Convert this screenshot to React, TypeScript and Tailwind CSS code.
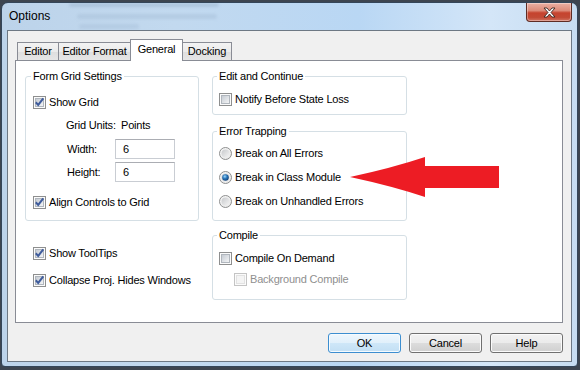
import React from "react";

function Defs() {
  return (
    <svg className="absolute w-0 h-0" aria-hidden="true">
      <defs>
        <linearGradient id="cbInner" x1="0" y1="0" x2="1" y2="1">
          <stop offset="0" stopColor="#c3c9d1" />
          <stop offset="1" stopColor="#f6f7f8" />
        </linearGradient>
        <linearGradient id="rbOuter" x1="0" y1="0" x2="1" y2="1">
          <stop offset="0" stopColor="#f8f8f8" />
          <stop offset="1" stopColor="#e6e6e6" />
        </linearGradient>
        <linearGradient id="rbInner" x1="0" y1="0" x2="1" y2="1">
          <stop offset="0" stopColor="#c7c9cc" />
          <stop offset="1" stopColor="#f5f5f5" />
        </linearGradient>
        <radialGradient id="rbDot" cx="0.4" cy="0.35" r="0.7">
          <stop offset="0" stopColor="#9fd8fb" />
          <stop offset="0.45" stopColor="#2b78bb" />
          <stop offset="1" stopColor="#0e3b72" />
        </radialGradient>
      </defs>
    </svg>
  );
}

function CheckBox({ checked, disabled }: { checked?: boolean; disabled?: boolean }) {
  return (
    <svg width="13" height="13" viewBox="0 0 13 13" className="shrink-0">
      <rect x="0.5" y="0.5" width="12" height="12" fill="#fbfbfb" stroke={disabled ? "#c4c4c4" : "#8e8f8f"} />
      <rect
        x="2.5"
        y="2.5"
        width="8"
        height="8"
        fill={disabled ? "#f4f4f4" : "url(#cbInner)"}
        stroke={disabled ? "#e2e2e2" : "#b0b6bd"}
      />
      {checked && (
        <path d="M2.8 6.3 L5.2 8.9 L10.3 2.4" stroke="#3f5c9c" strokeWidth="2" fill="none" strokeLinejoin="miter" />
      )}
    </svg>
  );
}

function Radio({ checked }: { checked?: boolean }) {
  return (
    <svg width="13" height="13" viewBox="0 0 13 13" className="shrink-0">
      <circle cx="6.5" cy="6.5" r="6" fill="url(#rbOuter)" stroke="#8e8f8f" />
      <circle cx="6.5" cy="6.5" r="4" fill="url(#rbInner)" />
      {checked && <circle cx="6.5" cy="6.5" r="3.3" fill="url(#rbDot)" />}
    </svg>
  );
}

function CheckRow({
  checked,
  disabled,
  className = "",
  children,
}: {
  checked?: boolean;
  disabled?: boolean;
  className?: string;
  children: React.ReactNode;
}) {
  return (
    <div className={`flex items-center h-[16px] gap-[3px] ${className}`}>
      <CheckBox checked={checked} disabled={disabled} />
      <span className={disabled ? "text-[#8f8f8f]" : ""}>{children}</span>
    </div>
  );
}

function RadioRow({ checked, className = "", children }: { checked?: boolean; className?: string; children: React.ReactNode }) {
  return (
    <div className={`flex items-center h-[16px] gap-[3px] ${className}`}>
      <Radio checked={checked} />
      <span>{children}</span>
    </div>
  );
}

function Group({ title, className = "", children }: { title: string; className?: string; children: React.ReactNode }) {
  return (
    <fieldset className={`border border-[#d5dfe5] rounded-[3px] ${className}`}>
      <legend className="px-[2px] -ml-[2px] leading-[14px]">{title}</legend>
      {children}
    </fieldset>
  );
}

function Tab({ label, width, selected, first }: { label: string; width: string; selected?: boolean; first?: boolean }) {
  if (selected) {
    return (
      <div
        className={`${width} ${first ? "" : "-ml-px"} relative z-10 h-[22px] border border-b-0 border-[#898c95] bg-white flex items-center justify-center pb-[3px]`}
      >
        {label}
      </div>
    );
  }
  return (
    <div
      className={`${width} ${first ? "" : "-ml-px"} h-[18px] mb-px border border-b-0 border-[#898c95] bg-[linear-gradient(180deg,#f3f3f3_0%,#ebebeb_50%,#dedede_51%,#e6e6e6_100%)] flex items-center justify-center`}
    >
      {label}
    </div>
  );
}

function Button({ label, primary }: { label: string; primary?: boolean }) {
  return (
    <div
      className={`w-[73px] h-[20px] rounded-[3px] border flex items-center justify-center ${
        primary
          ? "border-[#3c8ed0] bg-[linear-gradient(180deg,#eef7fd_0%,#e1f0fb_49%,#cfe7f8_50%,#c2dff4_100%)] shadow-[inset_0_0_0_1px_#f5fbff]"
          : "border-[#707070] bg-[linear-gradient(180deg,#f2f2f2_0%,#ebebeb_49%,#dddddd_50%,#cfcfcf_100%)] shadow-[inset_0_0_0_1px_#fbfbfb]"
      }`}
    >
      {label}
    </div>
  );
}

export default function App() {
  return (
    <div className="w-[580px] h-[370px] bg-[#3d4550] pt-[2px] pl-[1px] overflow-hidden font-['Liberation_Sans',Arial,sans-serif] text-[11px] tracking-[-0.2px] text-black">
      <Defs />
      <div className="w-[577px] h-[365px] rounded-t-[7px] rounded-b-[4px] border border-[#34465a] bg-[linear-gradient(90deg,#bcd3ea_0%,#c2d9ef_30%,#b9d7f4_62%,#d4e6f8_85%,#c6dcf1_100%)] flex flex-col px-[5px] pb-[4px]">
        {/* title bar */}
        <div className="relative h-[27px] flex items-start overflow-hidden">
          {/* blurred background seen through the glass */}
          <div className="absolute left-[62px] top-[0px] w-[150px] h-[4px] rounded-full bg-[#9fb8d2] opacity-60 blur-[1.5px]" />
          <div className="absolute left-[70px] top-[11px] w-[140px] h-[5px] rounded-full bg-[#a7bfd8] opacity-50 blur-[1.8px]" />
          <div className="absolute left-[72px] top-[21px] w-[60px] h-[5px] rounded-full bg-[#a7bfd8] opacity-45 blur-[1.8px]" />
          <span className="relative pl-[2px] pt-[5px] text-[12px] leading-[16px] tracking-normal">Options</span>
          <div className="relative ml-auto w-[46px] h-[19px] rounded-b-[4px] border border-t-0 border-[#5e2c24] bg-[linear-gradient(180deg,#eab0a3_0%,#dc8a78_42%,#c6432e_55%,#c24a35_80%,#d27462_100%)] shadow-[inset_0_0_0_1px_rgba(255,255,255,0.35)] flex items-center justify-center">
            <svg width="13" height="11" viewBox="0 0 13 11">
              <path
                d="M1 1 H4 L6.5 4 L9 1 H12 L8 5.5 L12 10 H9 L6.5 7 L4 10 H1 L5 5.5 Z"
                fill="#ffffff"
                stroke="#3b2620"
                strokeWidth="0.9"
                strokeLinejoin="round"
              />
            </svg>
          </div>
        </div>

        {/* client area */}
        <div className="flex-1 border border-[#6d7884] bg-[#f0f0f0] flex flex-col pl-[7px] pr-[8px] pt-[8px]">
          {/* tabs */}
          <div className="flex items-end h-[22px] pl-[2px] -mb-px relative z-10">
            <Tab label="Editor" width="w-[42px]" first />
            <Tab label="Editor Format" width="w-[73px]" />
            <Tab label="General" width="w-[53px]" selected />
            <Tab label="Docking" width="w-[50px]" />
          </div>

          {/* panel */}
          <div className="relative h-[263px] border border-[#898c95] bg-white flex pl-[9px] pt-[8px]">
            {/* left column */}
            <div className="w-[174px] flex flex-col">
              <Group title="Form Grid Settings" className="h-[152px] px-[7px]">
                <CheckRow checked className="mt-[11px]">
                  Show Grid
                </CheckRow>
                <div className="mt-[7px] h-[16px] flex items-center pl-[33px]">
                  <span className="w-[55px]">Grid Units:</span>
                  <span>Points</span>
                </div>
                <div className="mt-[6px] h-[20px] flex items-center pl-[34px]">
                  <span className="w-[48px]">Width:</span>
                  <div className="w-[60px] h-[20px] border border-[#c9cdd3] border-t-[#abadb3] bg-white flex items-center pl-[7px]">
                    6
                  </div>
                </div>
                <div className="mt-[3px] h-[20px] flex items-center pl-[34px]">
                  <span className="w-[48px]">Height:</span>
                  <div className="w-[60px] h-[20px] border border-[#c9cdd3] border-t-[#abadb3] bg-white flex items-center pl-[7px]">
                    6
                  </div>
                </div>
                <CheckRow checked className="mt-[12px]">
                  Align Controls to Grid
                </CheckRow>
              </Group>
              <div className="pl-[8px] flex flex-col">
                <CheckRow checked className="mt-[24px]">
                  Show ToolTips
                </CheckRow>
                <CheckRow checked className="mt-[11px]">
                  Collapse Proj. Hides Windows
                </CheckRow>
              </div>
            </div>

            {/* right column */}
            <div className="w-[195px] ml-[13px] flex flex-col">
              <Group title="Edit and Continue" className="h-[46px] px-[6px]">
                <CheckRow className="mt-[8px]">Notify Before State Loss</CheckRow>
              </Group>
              <Group title="Error Trapping" className="mt-[9px] h-[97px] px-[6px]">
                <RadioRow className="mt-[7px]">Break on All Errors</RadioRow>
                <RadioRow checked className="mt-[8px]">
                  Break in Class Module
                </RadioRow>
                <RadioRow className="mt-[8px]">Break on Unhandled Errors</RadioRow>
              </Group>
              <Group title="Compile" className="mt-[7px] h-[72px] px-[6px]">
                <CheckRow className="mt-[8px]">Compile On Demand</CheckRow>
                <CheckRow disabled className="mt-[5px] pl-[15px]">
                  Background Compile
                </CheckRow>
              </Group>
            </div>

            {/* red annotation arrow */}
            <svg className="absolute left-[334px] top-[95px]" width="149" height="43" viewBox="0 0 149 43">
              <path
                d="M0 21 Q42 12 75 1 L75 10 L149 10 L149 32 L75 32 L75 41 Q42 30 0 21 Z"
                fill="#ed1c24"
              />
            </svg>
          </div>

          {/* buttons */}
          <div className="mt-[10px] flex justify-end gap-[8px]">
            <Button label="OK" primary />
            <Button label="Cancel" />
            <Button label="Help" />
          </div>
        </div>
      </div>
    </div>
  );
}
